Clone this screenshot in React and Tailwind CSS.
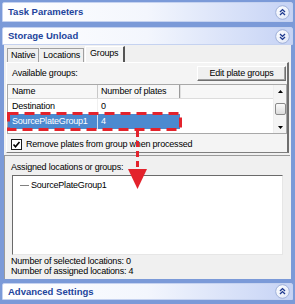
import React from "react";

function Chevron({ up }) {
  return (
    <svg width="15" height="15" viewBox="0 0 15 15">
      <defs>
        <linearGradient id={up ? "cgu" : "cgd"} x1="0" y1="0" x2="1" y2="1">
          <stop offset="0" stopColor="#ffffff" />
          <stop offset="1" stopColor="#dfe6f7" />
        </linearGradient>
      </defs>
      <circle cx="7.5" cy="7.5" r="6.8" fill={`url(#${up ? "cgu" : "cgd"})`} stroke="#9fb0d8" strokeWidth="1" />
      {up ? (
        <g fill="none" stroke="#1f3a8f" strokeWidth="1.4">
          <path d="M5 7 L7.5 4.6 L10 7" />
          <path d="M5 10 L7.5 7.6 L10 10" />
        </g>
      ) : (
        <g fill="none" stroke="#1f3a8f" strokeWidth="1.4">
          <path d="M5 5 L7.5 7.4 L10 5" />
          <path d="M5 8 L7.5 10.4 L10 8" />
        </g>
      )}
    </svg>
  );
}

function Header({ title, up, h }) {
  return (
    <div
      className={`${h} flex items-center justify-between pl-[5px] pr-[2px] rounded-t-[2px] border border-[#c5d2f0] bg-gradient-to-r from-white via-[#f3f6fd] to-[#c6d3f5]`}
    >
      <span className="text-[9.5px] font-bold text-[#22449c] leading-none">{title}</span>
      <Chevron up={up} />
    </div>
  );
}

export default function App() {
  return (
    <div
      className="relative w-[295px] h-[304px] bg-[#7b9ad8] flex flex-col pt-[2px] px-[2px] overflow-hidden text-black"
      style={{ fontFamily: '"Liberation Sans", Arial, sans-serif' }}
    >
      <Header title="Task Parameters" up h="h-[20px]" />
      <div className="h-[5px]" />
      <Header title="Storage Unload" up={false} h="h-[18px]" />
      <div className="mx-[2px] h-[234px] bg-[#f0f0f0] flex flex-col text-[9px] tracking-[-0.2px] leading-none">
        {/* tabs */}
        <div className="flex items-end h-[17px] pl-[3px]">
          <div className="h-[14px] px-[3px] flex items-center border-t border-l border-r border-[#a0a0a0] bg-[#f0f0f0]">Native</div>
          <div className="h-[14px] px-[3px] flex items-center border-t border-r border-[#a0a0a0] bg-[#f0f0f0] ml-[1px]">Locations</div>
          <div className="h-[16px] pl-[4px] pr-[5px] flex items-center border-t border-r-2 border-l border-t-white border-l-white border-r-[#555] bg-[#f4f4f4] ml-[1px] pb-[2px]">Groups</div>
        </div>
        {/* tab page */}
        <div className="mx-[2px] h-[91px] border-l border-b border-r-2 border-l-white border-b-[#7f7f7f] border-r-[#6f6f6f] border-t border-t-white bg-[#f4f4f4] flex flex-col">
          <div className="flex items-end justify-between h-[19px] pl-[5px] pr-[1px]">
            <span className="mb-[4px]">Available groups:</span>
            <div className="w-[89px] h-[15px] flex items-center justify-center border border-[#6f6f6f] border-t-white border-l-white shadow-[inset_-1px_-1px_0_#a0a0a0] bg-[#f0f0f0] mb-[1px]">
              Edit plate groups
            </div>
          </div>
          <div className="mt-[2px] ml-[0px] w-[280px] h-[50px] bg-white border border-[#a8a8a8] flex">
            <div className="flex-1 flex flex-col">
              <div className="h-[14px] flex bg-[#f7f7f7] border-b border-[#dcdcdc]">
                <div className="w-[90px] pl-[4px] flex items-center border-r border-[#c8c8c8]">Name</div>
                <div className="w-[82px] pl-[3px] flex items-center border-r border-[#9a9a9a] shadow-[1px_0_0_#e0e0e0]">Number of plates</div>
              </div>
              <div className="h-[15px] flex">
                <div className="w-[90px] pl-[4px] flex items-center border-r border-[#f0f0f0]">Destination</div>
                <div className="w-[82px] pl-[3px] flex items-center">0</div>
              </div>
              <div className="h-[15px] flex">
                <div className="w-[90px] pl-[4px] flex items-center bg-[#4c8ad0] text-white border-r border-[#cfe0f5]">SourcePlateGroup1</div>
                <div className="w-[82px] pl-[3px] flex items-center bg-[#4c8ad0] text-white">4</div>
              </div>
            </div>
            <div className="w-[13px] bg-[#f4f4f4] flex flex-col items-center border-l border-[#eeeeee]">
              <div className="h-[12px] flex items-center justify-center">
                <svg width="5" height="3" viewBox="0 0 5 3"><path d="M0 3 L2.5 0 L5 3Z" fill="#000" /></svg>
              </div>
              <div className="flex-1 w-full flex items-center justify-center">
                <div className="w-[11px] h-[12px] rounded-[2px] border border-[#8a8a8a] bg-gradient-to-b from-[#fafafa] to-[#dcdcdc]" />
              </div>
              <div className="h-[12px] flex items-center justify-center">
                <svg width="5" height="3" viewBox="0 0 5 3"><path d="M0 0 L2.5 3 L5 0Z" fill="#000" /></svg>
              </div>
            </div>
          </div>
          <div className="flex items-center h-[16px] mt-[2px] pl-[4px]">
            <div className="w-[11px] h-[11px] border border-[#1c1c1c] bg-white flex items-center justify-center">
              <svg width="9" height="9" viewBox="0 0 9 9"><path d="M1.5 4.5 L3.5 6.8 L7.5 2" fill="none" stroke="#000" strokeWidth="1.6" /></svg>
            </div>
            <span className="ml-[4px]">Remove plates from group when processed</span>
          </div>
        </div>
        {/* splitter */}
        <div className="h-[2px]" />
        <div className="flex-1 border-t border-l border-[#9a9a9a] ml-[0px] mr-[1px] flex flex-col bg-[#f0f0f0]">
          <div className="h-[19px] flex items-end pl-[6px] pb-[3px]">Assigned locations or groups:</div>
          <div className="ml-[7px] w-[271px] h-[80px] bg-white border border-t-[#6a6a6a] border-l-[#6a6a6a] border-r-[#e6e6e6] border-b-[#e6e6e6] pt-[4px]">
            <div className="flex items-center h-[11px]">
              <div className="w-[9px] h-px bg-[#808080] ml-[7px]" />
              <span className="ml-[2px]">SourcePlateGroup1</span>
            </div>
          </div>
          <div className="pl-[6px] pt-[2px] flex flex-col gap-[1px]">
            <span className="h-[9px]">Number of selected locations: 0</span>
            <span className="h-[9px]">Number of assigned locations: 4</span>
          </div>
        </div>
      </div>
      <div className="h-[4px]" />
      <Header title="Advanced Settings" up h="h-[17px]" />

      {/* annotation overlay */}
      <svg className="absolute left-0 top-0 pointer-events-none" width="295" height="304" viewBox="0 0 295 304">
        <rect x="8.5" y="113.5" width="172" height="16" fill="none" stroke="#e3232c" strokeWidth="3" strokeDasharray="10 6" />
        <line x1="137.5" y1="131" x2="137.5" y2="169" stroke="#e3232c" strokeWidth="3" strokeDasharray="6 4" />
        <path d="M128 169 L147 169 L137.5 189 Z" fill="#e3232c" />
      </svg>
    </div>
  );
}
